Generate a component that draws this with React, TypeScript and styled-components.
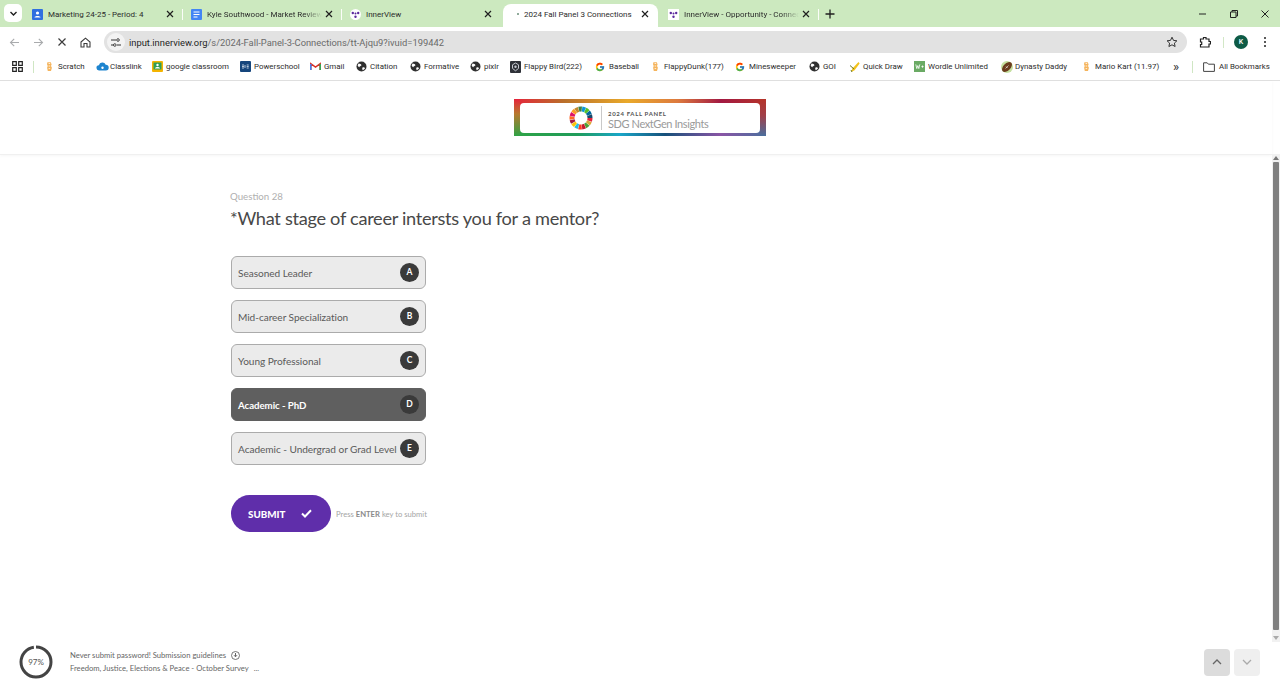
import React from 'react';
import styled, {createGlobalStyle} from 'styled-components';
import {FcGoogle} from 'react-icons/fc';

const UI_FONT = 'Roboto, "Open Sans", sans-serif';
const PAGE_FONT = 'Lato, "Noto Sans", sans-serif';

const GlobalStyle = createGlobalStyle`
  html, body {
    margin: 0;
    padding: 0;
    height: 100%;
    overflow: hidden;
    background: #fff;
  }
  * { box-sizing: border-box; }
`;

type FaviconKind = 'contacts' | 'docs' | 'inner' | 'dot' | 'innerSquare';

interface ITab {
    title: string;
    icon: FaviconKind;
    active?: boolean;
    fade?: boolean;
}

const tabs: ITab[] = [
    {title: 'Marketing 24-25 - Period: 4', icon: 'contacts'},
    {title: 'Kyle Southwood - Market Review', icon: 'docs', fade: true},
    {title: 'InnerView', icon: 'inner'},
    {title: '2024 Fall Panel 3 Connections', icon: 'dot', active: true},
    {title: 'InnerView - Opportunity - Connections', icon: 'innerSquare', fade: true},
];

type BookmarkKind = 'drop' | 'cloud' | 'classroom' | 'sis' | 'gmail' | 'globe' | 'flappy' | 'google' | 'pencil' | 'wordle' | 'football';

const bookmarks: {label: string; icon: BookmarkKind; w: number}[] = [
    {label: 'Scratch', icon: 'drop', w: 52},
    {label: 'Classlink', icon: 'cloud', w: 56},
    {label: 'google classroom', icon: 'classroom', w: 88},
    {label: 'Powerschool', icon: 'sis', w: 70},
    {label: 'Gmail', icon: 'gmail', w: 46},
    {label: 'Citation', icon: 'globe', w: 54},
    {label: 'Formative', icon: 'globe', w: 60},
    {label: 'pixlr', icon: 'globe', w: 40},
    {label: 'Flappy BIrd(222)', icon: 'flappy', w: 85},
    {label: 'Baseball', icon: 'google', w: 55},
    {label: 'FlappyDunk(177)', icon: 'drop', w: 85},
    {label: 'Minesweeper', icon: 'google', w: 74},
    {label: 'GOI', icon: 'globe', w: 40},
    {label: 'Quick Draw', icon: 'pencil', w: 65},
    {label: 'Wordle Unlimited', icon: 'wordle', w: 87},
    {label: 'Dynasty Daddy', icon: 'football', w: 80},
    {label: 'Mario Kart (11.97)', icon: 'drop', w: 85},
];

const options = [
    {label: 'Seasoned Leader', key: 'A'},
    {label: 'Mid-career Specialization', key: 'B'},
    {label: 'Young Professional', key: 'C'},
    {label: 'Academic - PhD', key: 'D', selected: true},
    {label: 'Academic - Undergrad or Grad Level', key: 'E'},
];

const sdgColors = ['#e5243b', '#dda63a', '#4c9f38', '#c5192d', '#ff3a21', '#26bde2', '#fcc30b', '#a21942', '#fd6925', '#dd1367', '#fd9d24', '#bf8b2e', '#3f7e44', '#0a97d9', '#56c02b', '#00689d', '#19486a'];

function Favicon({kind}: {kind: FaviconKind}) {
    if (kind === 'contacts') {
        return (
            <svg width="11" height="11" viewBox="0 0 11 11">
                <rect width="11" height="11" rx="1" fill="#2f6fe0" />
                <circle cx="5.5" cy="4" r="1.6" fill="#fff" />
                <path d="M2.5 8.5c0-2 6-2 6 0z" fill="#fff" />
            </svg>
        );
    }
    if (kind === 'docs') {
        return (
            <svg width="11" height="11" viewBox="0 0 11 11">
                <rect width="11" height="11" rx="1" fill="#4285f4" />
                <path d="M2.5 3h6M2.5 5.5h6M2.5 8h4" stroke="#fff" strokeWidth="1" />
            </svg>
        );
    }
    if (kind === 'dot') {
        return (
            <svg width="4" height="4" viewBox="0 0 4 4">
                <circle cx="2" cy="2" r="1" fill="#6b8f7a" />
            </svg>
        );
    }
    return (
        <svg width="11" height="11" viewBox="0 0 11 11">
            {kind === 'inner' ? <circle cx="5.5" cy="5.5" r="5.5" fill="#fff" /> : <rect width="11" height="11" fill="#fff" />}
            <circle cx="2.8" cy="4" r="1.2" fill="#5b2a9d" />
            <circle cx="8.2" cy="4" r="1.2" fill="#5b2a9d" />
            <circle cx="5.5" cy="4.6" r="1" fill="#5b2a9d" />
            <circle cx="5.5" cy="7.8" r="1.2" fill="#5b2a9d" />
        </svg>
    );
}

function BookmarkIcon({kind}: {kind: BookmarkKind}) {
    switch (kind) {
        case 'drop':
            return (
                <svg width="11" height="11" viewBox="0 0 11 11">
                    <path d="M3.4 1.2h3.4l.8 2.2-.6 1.6.9 1.7-.9 3.2-3.2.2-.7-3.4.6-1.7-.7-1.8z" fill="#f5b45c" />
                    <path d="M4.6 2.5h1.6M4.6 5h1.6M4.6 7.6h1.6" stroke="#fff" strokeWidth=".8" />
                </svg>
            );
        case 'cloud':
            return (
                <svg width="13" height="11" viewBox="0 0 13 11">
                    <path d="M3.2 9.5a2.6 2.6 0 0 1-.3-5.2 3.6 3.6 0 0 1 6.8-.6 2.9 2.9 0 0 1 .2 5.8z" fill="#1d84cf" />
                    <circle cx="6.5" cy="6.8" r="1.2" fill="#fff" />
                </svg>
            );
        case 'classroom':
            return (
                <svg width="11" height="11" viewBox="0 0 11 11">
                    <rect width="11" height="11" rx="1" fill="#f4b400" />
                    <rect x="1.5" y="1.5" width="8" height="7" fill="#2f9e57" />
                    <circle cx="5.5" cy="4" r="1.2" fill="#fff" />
                    <path d="M3 7.5c0-2 5-2 5 0z" fill="#fff" />
                </svg>
            );
        case 'sis':
            return (
                <svg width="11" height="11" viewBox="0 0 11 11">
                    <rect width="11" height="11" rx="1" fill="#15457c" />
                    <path d="M2 4h2M2 5.5h2M2 7h2M5 4v3M6.7 4h2M6.7 5.5h2M6.7 7h2" stroke="#dfe8f2" strokeWidth=".8" />
                </svg>
            );
        case 'gmail':
            return (
                <svg width="11" height="11" viewBox="0 0 11 11">
                    <path d="M.8 9V2.6L5.5 6l4.7-3.4V9" fill="none" stroke="#d93025" strokeWidth="1.5" />
                    <path d="M.8 9V3" stroke="#4285f4" strokeWidth="1.5" />
                    <path d="M10.2 9V3" stroke="#34a853" strokeWidth="1.5" />
                </svg>
            );
        case 'globe':
            return (
                <svg width="11" height="11" viewBox="0 0 11 11">
                    <circle cx="5.5" cy="5.5" r="5" fill="#2f2f2f" />
                    <path d="M2.6 2.6c1.4.2 2.6.5 2.9 1.6-.7 1-2 .7-2.2 2C2.7 5.8 1.9 5 1.6 4.2zM6.8 6.2c1 .1 1.9.4 2.3.9-.4 1-1.3 1.8-2.3 2.1-.6-.9-.9-2.1 0-3z" fill="#fff" />
                </svg>
            );
        case 'flappy':
            return (
                <svg width="11" height="12" viewBox="0 0 11 12">
                    <rect width="11" height="12" rx="1" fill="#2e3138" />
                    <path d="M5.5 2l3 1.8v3.6L5.5 9.8 2.5 7.4V3.8z" fill="none" stroke="#c5c8cf" strokeWidth="1" />
                    <circle cx="5.5" cy="5.8" r="1.2" fill="#c5c8cf" />
                </svg>
            );
        case 'google':
            return <FcGoogle size={10} />;
        case 'pencil':
            return (
                <svg width="11" height="12" viewBox="0 0 11 12">
                    <path d="M9.5 1L3.6 7.2 2 11l3.6-1.8L10.6 2.6z" fill="#f2c21b" />
                    <path d="M1 4.5l4 3.5M2 9l1 2" stroke="#6a7a2a" strokeWidth="1" />
                </svg>
            );
        case 'wordle':
            return (
                <svg width="11" height="11" viewBox="0 0 11 11">
                    <rect width="11" height="11" fill="#6aaa64" />
                    <path d="M1.8 3.4l1 4.2 1-3 1 3 1-4.2M7.4 5.6h2.2M8.5 4.5v2.2" fill="none" stroke="#fff" strokeWidth=".8" />
                </svg>
            );
        default:
            return (
                <svg width="12" height="12" viewBox="0 0 12 12">
                    <circle cx="6" cy="6" r="6" fill="#c5e0a0" />
                    <ellipse cx="6" cy="6" rx="6" ry="3.6" transform="rotate(-45 6 6)" fill="#6b3d1e" />
                    <path d="M4.5 7.5l3-3M5 5.5l1.5 1.5" stroke="#fff" strokeWidth=".6" />
                </svg>
            );
    }
}

function SdgRing() {
    const r = 9;
    const circ = 2 * Math.PI * r;
    const seg = circ / sdgColors.length;
    return (
        <svg width="24" height="24" viewBox="0 0 24 24">
            {sdgColors.map((c, i) => (
                <circle
                    key={c + i}
                    cx="12"
                    cy="12"
                    r={r}
                    fill="none"
                    stroke={c}
                    strokeWidth="5"
                    strokeDasharray={`${seg - 0.3} ${circ - seg + 0.3}`}
                    strokeDashoffset={-seg * i}
                />
            ))}
        </svg>
    );
}

export default function App() {
    return (
        <Screen>
            <GlobalStyle />
            <TabStrip>
                <TabSearch>
                    <svg width="9" height="9" viewBox="0 0 9 9">
                        <path d="M1.5 3l3 3 3-3" fill="none" stroke="#1f1f1f" strokeWidth="1.4" />
                    </svg>
                </TabSearch>
                {tabs.map((t, i) => (
                    <Tab key={t.title} $active={t.active} $divider={i < 2 || i === 4}>
                        <TabIcon $dot={t.icon === 'dot'}><Favicon kind={t.icon} /></TabIcon>
                        <TabTitle $fade={t.fade}>{t.title}</TabTitle>
                        <TabClose>
                            <svg width="8" height="8" viewBox="0 0 8 8">
                                <path d="M1 1l6 6M7 1L1 7" stroke="#1f1f1f" strokeWidth="1.2" />
                            </svg>
                        </TabClose>
                    </Tab>
                ))}
                <NewTab>
                    <svg width="10" height="10" viewBox="0 0 10 10">
                        <path d="M5 .5v9M.5 5h9" stroke="#1f1f1f" strokeWidth="1.3" />
                    </svg>
                </NewTab>
                <WindowControls>
                    <WindowButton>
                        <svg width="10" height="10" viewBox="0 0 10 10"><path d="M1 5h7" stroke="#222" strokeWidth="1" /></svg>
                    </WindowButton>
                    <WindowButton>
                        <svg width="10" height="10" viewBox="0 0 10 10">
                            <path d="M1.5 3h5.5v5.5H1.5zM3 3V1.5h5.5V7H7" fill="none" stroke="#222" strokeWidth="1" />
                        </svg>
                    </WindowButton>
                    <WindowButton>
                        <svg width="10" height="10" viewBox="0 0 10 10"><path d="M1.5 1.5l7 7M8.5 1.5l-7 7" stroke="#222" strokeWidth="1" /></svg>
                    </WindowButton>
                </WindowControls>
            </TabStrip>

            <Toolbar>
                <NavButton>
                    <svg width="11" height="11" viewBox="0 0 11 11"><path d="M10 5.5H1.5M5.2 1.8L1.5 5.5l3.7 3.7" fill="none" stroke="#a9abad" strokeWidth="1.1" /></svg>
                </NavButton>
                <NavButton>
                    <svg width="11" height="11" viewBox="0 0 11 11"><path d="M1 5.5h8.5M5.8 1.8l3.7 3.7-3.7 3.7" fill="none" stroke="#a9abad" strokeWidth="1.1" /></svg>
                </NavButton>
                <NavButton>
                    <svg width="10" height="10" viewBox="0 0 10 10"><path d="M1.5 1.5l7 7M8.5 1.5l-7 7" stroke="#3c3c3c" strokeWidth="1.2" /></svg>
                </NavButton>
                <NavButton>
                    <svg width="11" height="11" viewBox="0 0 11 11"><path d="M1 5l4.5-3.8L10 5v5H7V6.5H4V10H1z" fill="none" stroke="#3c3c3c" strokeWidth="1.1" /></svg>
                </NavButton>
                <Omnibox>
                    <SiteBadge>
                        <svg width="10" height="9" viewBox="0 0 10 9">
                            <path d="M0 2h5M0 7h2.5M6 7h4" stroke="#333" strokeWidth="1" />
                            <circle cx="7" cy="2" r="1.3" fill="none" stroke="#333" strokeWidth=".9" />
                            <circle cx="3.8" cy="7" r="1.3" fill="none" stroke="#333" strokeWidth=".9" />
                        </svg>
                    </SiteBadge>
                    <UrlText>input.innerview.org<UrlPath>/s/2024-Fall-Panel-3-Connections/tt-Ajqu9?ivuid=199442</UrlPath></UrlText>
                    <svg width="12" height="12" viewBox="0 0 12 12">
                        <path d="M6 1.2l1.5 3.2 3.4.4-2.5 2.3.7 3.4L6 8.8l-3.1 1.7.7-3.4L1.1 4.8l3.4-.4z" fill="none" stroke="#333" strokeWidth="1" />
                    </svg>
                </Omnibox>
                <ExtensionButton>
                    <svg width="12" height="12" viewBox="0 0 12 12">
                        <path d="M1.5 3h3V1.5h2.5V3h3v2.5H11.5V8H10v3H1.5V8.5h1.2V6H1.5z" fill="none" stroke="#222" strokeWidth="1.2" />
                    </svg>
                </ExtensionButton>
                <ToolbarDivider />
                <Avatar>K</Avatar>
                <MenuDots><i /><i /><i /></MenuDots>
            </Toolbar>

            <BookmarksBar>
                <AppsIcon>
                    <svg width="11" height="11" viewBox="0 0 11 11">
                        <path d="M.7.7h3.6v3.6H.7zM6.7.7h3.6v3.6H6.7zM.7 6.7h3.6v3.6H.7zM6.7 6.7h3.6v3.6H6.7z" fill="none" stroke="#222" strokeWidth="1.2" />
                    </svg>
                </AppsIcon>
                <BarDivider />
                <BookmarkList>
                    {bookmarks.map(b => (
                        <Bookmark key={b.label} $w={b.w}>
                            <BookmarkGlyph><BookmarkIcon kind={b.icon} /></BookmarkGlyph>
                            <span>{b.label}</span>
                        </Bookmark>
                    ))}
                </BookmarkList>
                <Overflow>»</Overflow>
                <BarDivider />
                <AllBookmarks>
                    <svg width="12" height="10" viewBox="0 0 12 10">
                        <path d="M.6 9.4V.8h3.6l1.2 1.4h6v7.2z" fill="none" stroke="#444" strokeWidth="1" />
                    </svg>
                    <span>All Bookmarks</span>
                </AllBookmarks>
            </BookmarksBar>

            <Viewport>
                <Content>
                    <Header>
                        <Banner>
                            <BannerCard>
                                <SdgRing />
                                <BannerRule />
                                <BannerCopy>
                                    <BannerKicker>2024 FALL PANEL</BannerKicker>
                                    <BannerTitle>SDG NextGen Insights</BannerTitle>
                                </BannerCopy>
                            </BannerCard>
                        </Banner>
                    </Header>
                    <Main>
                        <QuestionNumber>Question 28</QuestionNumber>
                        <QuestionTitle>*What stage of career intersts you for a mentor?</QuestionTitle>
                        <OptionList>
                            {options.map(o => (
                                <Option key={o.key} $selected={o.selected}>
                                    <span>{o.label}</span>
                                    <KeyBadge>{o.key}</KeyBadge>
                                </Option>
                            ))}
                        </OptionList>
                        <SubmitRow>
                            <SubmitButton>
                                <span>SUBMIT</span>
                                <svg width="11" height="9" viewBox="0 0 11 9">
                                    <path d="M1 4.5l3 3 6-6.2" fill="none" stroke="#fff" strokeWidth="2" />
                                </svg>
                            </SubmitButton>
                            <SubmitHint>Press <b>ENTER</b> key to submit</SubmitHint>
                        </SubmitRow>
                    </Main>
                    <Footer>
                        <Progress>
                            <svg width="34" height="34" viewBox="0 0 34 34">
                                <circle
                                    cx="17"
                                    cy="17"
                                    r="15"
                                    fill="none"
                                    stroke="#444"
                                    strokeWidth="3"
                                    strokeDasharray={`${2 * Math.PI * 15 * 0.97} ${2 * Math.PI * 15}`}
                                    transform="rotate(-90 17 17)"
                                />
                            </svg>
                            <ProgressLabel>97%</ProgressLabel>
                        </Progress>
                        <FooterText>
                            <FooterLine>
                                Never submit password! Submission guidelines
                                <svg width="9" height="9" viewBox="0 0 9 9">
                                    <circle cx="4.5" cy="4.5" r="4" fill="none" stroke="#555" strokeWidth=".8" />
                                    <path d="M4.5 2v3.4M3 4.2l1.5 1.6L6 4.2" fill="none" stroke="#555" strokeWidth=".9" />
                                </svg>
                            </FooterLine>
                            <FooterLine>
                                Freedom, Justice, Elections &amp; Peace - October Survey
                                <span>...</span>
                            </FooterLine>
                        </FooterText>
                        <Pager>
                            <PagerButton $strong>
                                <svg width="10" height="6" viewBox="0 0 10 6"><path d="M1 5l4-4 4 4" fill="none" stroke="#666" strokeWidth="1.3" /></svg>
                            </PagerButton>
                            <PagerButton>
                                <svg width="10" height="6" viewBox="0 0 10 6"><path d="M1 1l4 4 4-4" fill="none" stroke="#aaa" strokeWidth="1.3" /></svg>
                            </PagerButton>
                        </Pager>
                    </Footer>
                </Content>
                <Scrollbar>
                    <ScrollTrack>
                        <ScrollArrow>
                            <svg width="6" height="4" viewBox="0 0 6 4"><path d="M3 0l3 4H0z" fill="#777" /></svg>
                        </ScrollArrow>
                        <ScrollThumb />
                        <ScrollRest />
                        <ScrollArrow>
                            <svg width="6" height="4" viewBox="0 0 6 4"><path d="M3 4l3-4H0z" fill="#aaa" /></svg>
                        </ScrollArrow>
                    </ScrollTrack>
                </Scrollbar>
            </Viewport>
        </Screen>
    );
}

const Screen = styled.div`
  width: 1280px;
  height: 692px;
  display: flex;
  flex-direction: column;
  overflow: hidden;
  font-family: ${UI_FONT};
  background: #fff;
`;

const TabStrip = styled.div`
  height: 27px;
  flex: none;
  display: flex;
  align-items: flex-end;
  background: #cce9bf;
  padding-left: 4px;
`;

const TabSearch = styled.div`
  width: 18px;
  height: 18px;
  margin: 0 2px 5px 0;
  border-radius: 5px;
  background: #fff;
  display: flex;
  align-items: center;
  justify-content: center;
`;

const Tab = styled.div<{$active?: boolean; $divider?: boolean}>`
  position: relative;
  width: 159px;
  height: 23px;
  flex: none;
  display: flex;
  align-items: center;
  padding: 0 5px 3px 8px;
  color: #2b2b2b;
  font-size: 8px;
  ${p => p.$active && `
    background: #fff;
    border-radius: 8px 8px 0 0;
    margin: 0 2px 0 2px;
    width: 155px;
    padding-left: 13px;
  `}
  &::after {
    content: '';
    display: ${p => (p.$divider ? 'block' : 'none')};
    position: absolute;
    right: 0;
    top: 5px;
    width: 1px;
    height: 11px;
    background: #fbfdf9;
  }
`;

const TabIcon = styled.span<{$dot?: boolean}>`
  width: ${p => (p.$dot ? '8px' : '16px')};
  flex: none;
  display: flex;
  align-items: center;
`;

const TabTitle = styled.span<{$fade?: boolean}>`
  flex: 1;
  white-space: nowrap;
  overflow: hidden;
  ${p => p.$fade && `
    -webkit-mask-image: linear-gradient(90deg, #000 85%, transparent 100%);
    mask-image: linear-gradient(90deg, #000 85%, transparent 100%);
  `}
`;

const TabClose = styled.span`
  width: 14px;
  margin-right: 1px;
  flex: none;
  display: flex;
  align-items: center;
  justify-content: center;
`;

const NewTab = styled.div`
  width: 21px;
  height: 23px;
  padding-bottom: 3px;
  display: flex;
  align-items: center;
  justify-content: center;
`;

const WindowControls = styled.div`
  margin-left: auto;
  height: 27px;
  display: flex;
  align-self: flex-start;
`;

const WindowButton = styled.div`
  width: 31px;
  height: 27px;
  display: flex;
  align-items: center;
  justify-content: center;
`;

const Toolbar = styled.div`
  height: 27px;
  flex: none;
  display: flex;
  align-items: center;
  padding: 3px 0 0 3px;
  background: #fff;
  border-radius: 8px 8px 0 0;
`;

const NavButton = styled.div`
  width: 23.5px;
  height: 22px;
  flex: none;
  display: flex;
  align-items: center;
  justify-content: center;
`;

const Omnibox = styled.div`
  width: 1083px;
  height: 22px;
  margin-left: 7px;
  padding: 0 9px 0 3px;
  display: flex;
  align-items: center;
  background: #e2e2e2;
  border-radius: 11px;
`;

const SiteBadge = styled.div`
  width: 18px;
  height: 18px;
  flex: none;
  display: flex;
  align-items: center;
  justify-content: center;
  border-radius: 50%;
  background: #f3f3f3;
`;

const UrlText = styled.div`
  flex: 1;
  margin-left: 4px;
  font-size: 9.35px;
  color: #1f1f1f;
  white-space: nowrap;
`;

const UrlPath = styled.span`
  color: #6a6a6a;
`;

const ExtensionButton = styled.div`
  width: 24px;
  margin-left: 6px;
  display: flex;
  justify-content: center;
`;

const ToolbarDivider = styled.div`
  width: 1px;
  height: 11px;
  margin: 0 10px 0 6px;
  background: #d2e7c6;
`;

const Avatar = styled.div`
  width: 14px;
  height: 14px;
  border-radius: 50%;
  background: #0e5b46;
  color: #fff;
  font-size: 7px;
  line-height: 14px;
  text-align: center;
  font-weight: 500;
`;

const MenuDots = styled.div`
  margin-left: 16px;
  display: flex;
  flex-direction: column;
  gap: 1.6px;
  i {
    width: 2px;
    height: 2px;
    border-radius: 50%;
    background: #222;
  }
`;

const BookmarksBar = styled.div`
  height: 27px;
  flex: none;
  display: flex;
  align-items: center;
  padding: 0 0 1px 12px;
  background: #fff;
  border-bottom: 1px solid #e0e0e0;
  font-size: 7.9px;
  color: #2c2c2c;
`;

const AppsIcon = styled.div`
  width: 11px;
  height: 11px;
  flex: none;
  display: flex;
`;

const BarDivider = styled.div`
  width: 1px;
  height: 12px;
  flex: none;
  margin: 0 10px;
  background: #cfe6c3;
`;

const BookmarkList = styled.div`
  display: flex;
  align-items: center;
  width: 1126px;
  flex: none;
`;

const Bookmark = styled.div<{$w: number}>`
  width: ${p => p.$w}px;
  flex: none;
  display: flex;
  align-items: center;
  white-space: nowrap;
`;

const BookmarkGlyph = styled.span`
  width: 14px;
  flex: none;
  display: flex;
  align-items: center;
`;

const Overflow = styled.div`
  width: 12px;
  flex: none;
  font-size: 13px;
  line-height: 13px;
  text-align: center;
`;

const AllBookmarks = styled.div`
  display: flex;
  align-items: center;
  gap: 4px;
  white-space: nowrap;
`;

const Viewport = styled.div`
  flex: 1;
  min-height: 0;
  display: flex;
`;

const Content = styled.div`
  flex: 1;
  min-width: 0;
  display: flex;
  flex-direction: column;
  font-family: ${PAGE_FONT};
`;

const Header = styled.header`
  height: 74px;
  flex: none;
  display: flex;
  align-items: center;
  justify-content: center;
  padding-left: 8px;
  border-bottom: 1px solid #f0f0f0;
  box-shadow: 0 1px 3px rgba(0, 0, 0, 0.04);
`;

const Banner = styled.div`
  width: 252px;
  height: 37px;
  padding: 4px 6px 3px;
  background:
    linear-gradient(#e5243b, #b8792e 40%, #2fa345) left / 6px 100% no-repeat,
    linear-gradient(#b5332a, #a0404a 45%, #4a6f9e) right / 6px 100% no-repeat,
    linear-gradient(90deg, #e5243b 0%, #b9702a 20%, #e9a92a 45%, #dd7a3e 65%, #a21942 82%, #b5332a 100%) top / 100% 50% no-repeat,
    linear-gradient(90deg, #2fa345 0%, #1f9c5a 25%, #19a6c8 42%, #17507a 60%, #8a55a5 82%, #4a6f9e 100%) bottom / 100% 50% no-repeat;
`;

const BannerCard = styled.div`
  height: 100%;
  display: flex;
  align-items: center;
  padding-left: 49px;
  background: #fff;
  border-radius: 4px;
`;

const BannerRule = styled.div`
  width: 1px;
  height: 24px;
  margin: 0 6px 0 8px;
  background: #c9c9c9;
`;

const BannerCopy = styled.div`
  padding-top: 3px;
  display: flex;
  flex-direction: column;
`;

const BannerKicker = styled.div`
  font-size: 6px;
  line-height: 8px;
  font-weight: 700;
  letter-spacing: 0.65px;
  color: #555;
`;

const BannerTitle = styled.div`
  font-size: 11px;
  line-height: 12px;
  letter-spacing: -0.4px;
  color: #9a9a9a;
`;

const Main = styled.main`
  flex: 1;
  min-height: 0;
  padding: 34px 0 0 231px;
`;

const QuestionNumber = styled.div`
  font-size: 9.7px;
  line-height: 14px;
  color: #b0b0b0;
  margin-left: -1px;
`;

const QuestionTitle = styled.h1`
  margin: 2px 0 0 -1px;
  font-size: 18.2px;
  line-height: 26px;
  letter-spacing: -0.3px;
  font-weight: 400;
  color: #484848;
`;

const OptionList = styled.div`
  width: 195px;
  margin-top: 25px;
  display: flex;
  flex-direction: column;
  gap: 11px;
`;

const Option = styled.div<{$selected?: boolean}>`
  height: 33px;
  display: flex;
  align-items: center;
  justify-content: space-between;
  padding: 0 6px 0 6px;
  border: 1px solid ${p => (p.$selected ? '#5f5f5f' : '#ababab')};
  border-radius: 6px;
  background: ${p => (p.$selected ? '#5f5f5f' : '#ebebeb')};
  color: ${p => (p.$selected ? '#fff' : '#5a5a5a')};
  font-size: ${p => (p.$selected ? '9.7px' : '10.1px')};
  letter-spacing: -0.05px;
  font-weight: ${p => (p.$selected ? 700 : 400)};
  white-space: nowrap;
`;

const KeyBadge = styled.span`
  width: 19px;
  height: 19px;
  flex: none;
  border-radius: 50%;
  background: #3a3a3a;
  color: #fff;
  font-size: 8.5px;
  font-weight: 700;
  line-height: 19px;
  letter-spacing: 0;
  text-align: center;
`;

const SubmitRow = styled.div`
  margin-top: 30px;
  display: flex;
  align-items: center;
`;

const SubmitButton = styled.div`
  width: 100px;
  height: 37px;
  padding: 0 19px 0 17px;
  display: flex;
  align-items: center;
  justify-content: space-between;
  border-radius: 19px;
  background: #5f2eaa;
  color: #fff;
  font-size: 9.8px;
  font-weight: 900;
`;

const SubmitHint = styled.div`
  margin-left: 5px;
  font-size: 7.65px;
  color: #a5a5a5;
  b {
    color: #8a8a8a;
    font-weight: 700;
  }
`;

const Footer = styled.footer`
  height: 50px;
  flex: none;
  display: flex;
  align-items: center;
  padding: 0 12px 10px 19px;
`;

const Progress = styled.div`
  position: relative;
  width: 34px;
  height: 34px;
  flex: none;
`;

const ProgressLabel = styled.div`
  position: absolute;
  inset: 0;
  display: flex;
  align-items: center;
  justify-content: center;
  font-size: 8px;
  color: #555;
`;

const FooterText = styled.div`
  margin-left: 17px;
  display: flex;
  flex-direction: column;
  gap: 2px;
`;

const FooterLine = styled.div`
  display: flex;
  align-items: center;
  gap: 5px;
  font-size: 7.65px;
  line-height: 11px;
  color: #666;
  white-space: nowrap;
`;

const Pager = styled.div`
  margin-left: auto;
  display: flex;
  gap: 4px;
`;

const PagerButton = styled.div<{$strong?: boolean}>`
  width: 26px;
  height: 27px;
  display: flex;
  align-items: center;
  justify-content: center;
  border-radius: 4px;
  background: ${p => (p.$strong ? '#dcdcdc' : '#efefef')};
`;

const Scrollbar = styled.div`
  width: 8px;
  flex: none;
  padding: 73px 0 50px;
  display: flex;
`;

const ScrollTrack = styled.div`
  flex: 1;
  display: flex;
  flex-direction: column;
  align-items: center;
  background: #f1f1f1;
`;

const ScrollArrow = styled.div`
  height: 8px;
  width: 100%;
  flex: none;
  display: flex;
  align-items: center;
  justify-content: center;
`;

const ScrollThumb = styled.div`
  width: 6px;
  height: 468px;
  flex: none;
  border-radius: 1px;
  background: #808080;
`;

const ScrollRest = styled.div`
  flex: 1;
`;
